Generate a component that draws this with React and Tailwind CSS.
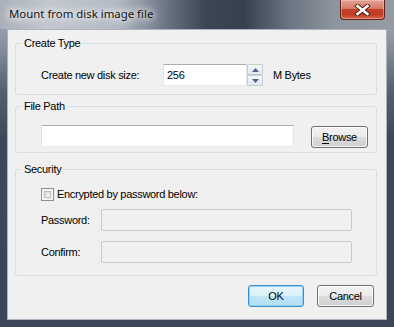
export default function App() {
  return (
    <div className="w-[394px] h-[327px] flex flex-col overflow-hidden bg-[linear-gradient(180deg,#a6aeb8_0px,#8d97a4_40px,#56616f_90px,#3c4759_140px,#3b4659_100%)] font-['Liberation_Sans',Arial,sans-serif] text-[11px] tracking-[-0.3px] text-black">
      {/* Title bar */}
      <div className="h-[29px] shrink-0 flex items-start relative bg-[linear-gradient(90deg,#a9b0b9_0%,#c3c8cf_12%,#b3bac3_30%,#6c7684_42%,#3c4554_52%,#37404e_62%,#6a7380_73%,#8e959e_85%,#959ba3_100%)]">
        <span className="ml-[9px] mt-[6px] font-['Noto_Sans',sans-serif] text-[11.4px] tracking-normal leading-[16px] text-[#141414] [text-shadow:0_0_6px_#ffffff,0_0_10px_#ffffff,0_0_14px_rgba(255,255,255,0.8)]">
          Mount from disk image file
        </span>
        <div className="absolute left-[340px] top-0 w-[45px] h-[20px] rounded-b-[4px] border border-t-0 border-[#5b2319] bg-[linear-gradient(180deg,#e4a395_0%,#d47a66_45%,#c2412a_50%,#c13a22_75%,#d8674c_100%)] shadow-[inset_0_0_0_1px_rgba(255,210,200,0.45)] flex items-center justify-center">
          <svg width="17" height="12" viewBox="0 0 17 12">
            <path d="M3.5 2 L13.5 10 M13.5 2 L3.5 10" stroke="#4a1a12" strokeWidth="4.4" strokeLinecap="square" fill="none" />
            <path d="M3.5 2 L13.5 10 M13.5 2 L3.5 10" stroke="#ffffff" strokeWidth="2.6" strokeLinecap="square" fill="none" />
          </svg>
        </div>
      </div>

      {/* Client area */}
      <div className="flex-1 mx-[7px] mb-[7px] border border-[#aab3be] bg-[#f0f0f0] flex flex-col pl-[7px]">
        {/* Create Type */}
        <fieldset className="w-[362px] mt-[7px] border border-[#d5dfe5] rounded-[3px]">
          <legend className="ml-[6px] px-[2px] leading-[13px]">Create Type</legend>
          <div className="flex items-center mt-[14px] mb-[8px] ml-[25px] h-[22px]">
            <span className="w-[122px]">Create new disk size:</span>
            <div className="w-[84px] h-[22px] border border-[#abadb3] border-l-[#e2e3ea] border-r-[#e2e3ea] border-b-[#e3e9ef] bg-white flex items-center pl-[3px]">
              256
            </div>
            <div className="w-[16px] h-[22px] flex flex-col">
              <div className="h-[11px] border border-[#c6ccd3] rounded-[1px] bg-[linear-gradient(180deg,#f6f7f9,#e4e8ec)] flex items-center justify-center">
                <svg width="7" height="4" viewBox="0 0 7 4"><path d="M0 4 L3.5 0 L7 4 Z" fill="#4a6593" /></svg>
              </div>
              <div className="h-[11px] border border-[#c6ccd3] rounded-[1px] bg-[linear-gradient(180deg,#f6f7f9,#e4e8ec)] flex items-center justify-center">
                <svg width="7" height="4" viewBox="0 0 7 4"><path d="M0 0 L7 0 L3.5 4 Z" fill="#4a6593" /></svg>
              </div>
            </div>
            <span className="ml-[10px]">M Bytes</span>
          </div>
        </fieldset>

        {/* File Path */}
        <fieldset className="w-[362px] mt-[5px] border border-[#d5dfe5] rounded-[3px]">
          <legend className="ml-[6px] px-[2px] leading-[13px]">File Path</legend>
          <div className="flex items-start mt-[12px] mb-[4px] ml-[25px] h-[23px]">
            <div className="w-[253px] h-[22px] border border-[#abadb3] border-l-[#e2e3ea] border-r-[#e2e3ea] border-b-[#e3e9ef] bg-white" />
            <button className="ml-[17px] mt-[1px] w-[57px] h-[22px] border border-[#707070] rounded-[3px] bg-[linear-gradient(180deg,#f2f2f2_0%,#ebebeb_50%,#dddddd_50%,#cfcfcf_100%)] shadow-[inset_0_0_0_1px_rgba(255,255,255,0.8)] flex items-center justify-center leading-none">
              <span><span className="underline underline-offset-[2px]">B</span>rowse</span>
            </button>
          </div>
        </fieldset>

        {/* Security */}
        <fieldset className="w-[362px] mt-[10px] border border-[#d5dfe5] rounded-[3px]">
          <legend className="ml-[6px] px-[2px] leading-[13px]">Security</legend>
          <div className="flex items-center mt-[12px] ml-[25px] h-[13px]">
            <span className="w-[13px] h-[13px] border border-[#8e8f8f] bg-[#f4f4f4] p-[2px] flex">
              <span className="flex-1 border border-[#bcbcbc] bg-[linear-gradient(135deg,#d7d7d7,#f7f7f7)]" />
            </span>
            <span className="ml-[3px]">Encrypted by password below:</span>
          </div>
          <div className="flex items-center mt-[8px] ml-[25px] h-[22px]">
            <span className="w-[60px]">Password:</span>
            <div className="w-[251px] h-[22px] border border-[#c8c8c8] rounded-[2px] bg-[#f0f0f0]" />
          </div>
          <div className="flex items-center mt-[10px] mb-[12px] ml-[25px] h-[22px]">
            <span className="w-[60px]">Confirm:</span>
            <div className="w-[251px] h-[22px] border border-[#c8c8c8] rounded-[2px] bg-[#f0f0f0]" />
          </div>
        </fieldset>

        {/* Buttons */}
        <div className="flex justify-end gap-[13px] pr-[12px] mt-[9px]">
          <button className="w-[56px] h-[22px] border border-[#3c8fcd] rounded-[3px] bg-[linear-gradient(180deg,#eaf6fd_0%,#d9f0fc_50%,#c2e6f8_50%,#b1def5_100%)] shadow-[inset_0_0_0_1px_#8fd3f5] flex items-center justify-center leading-none">
            OK
          </button>
          <button className="w-[57px] h-[22px] border border-[#707070] rounded-[3px] bg-[linear-gradient(180deg,#f2f2f2_0%,#ebebeb_50%,#dddddd_50%,#cfcfcf_100%)] shadow-[inset_0_0_0_1px_rgba(255,255,255,0.8)] flex items-center justify-center leading-none">
            Cancel
          </button>
        </div>
      </div>
    </div>
  );
}
